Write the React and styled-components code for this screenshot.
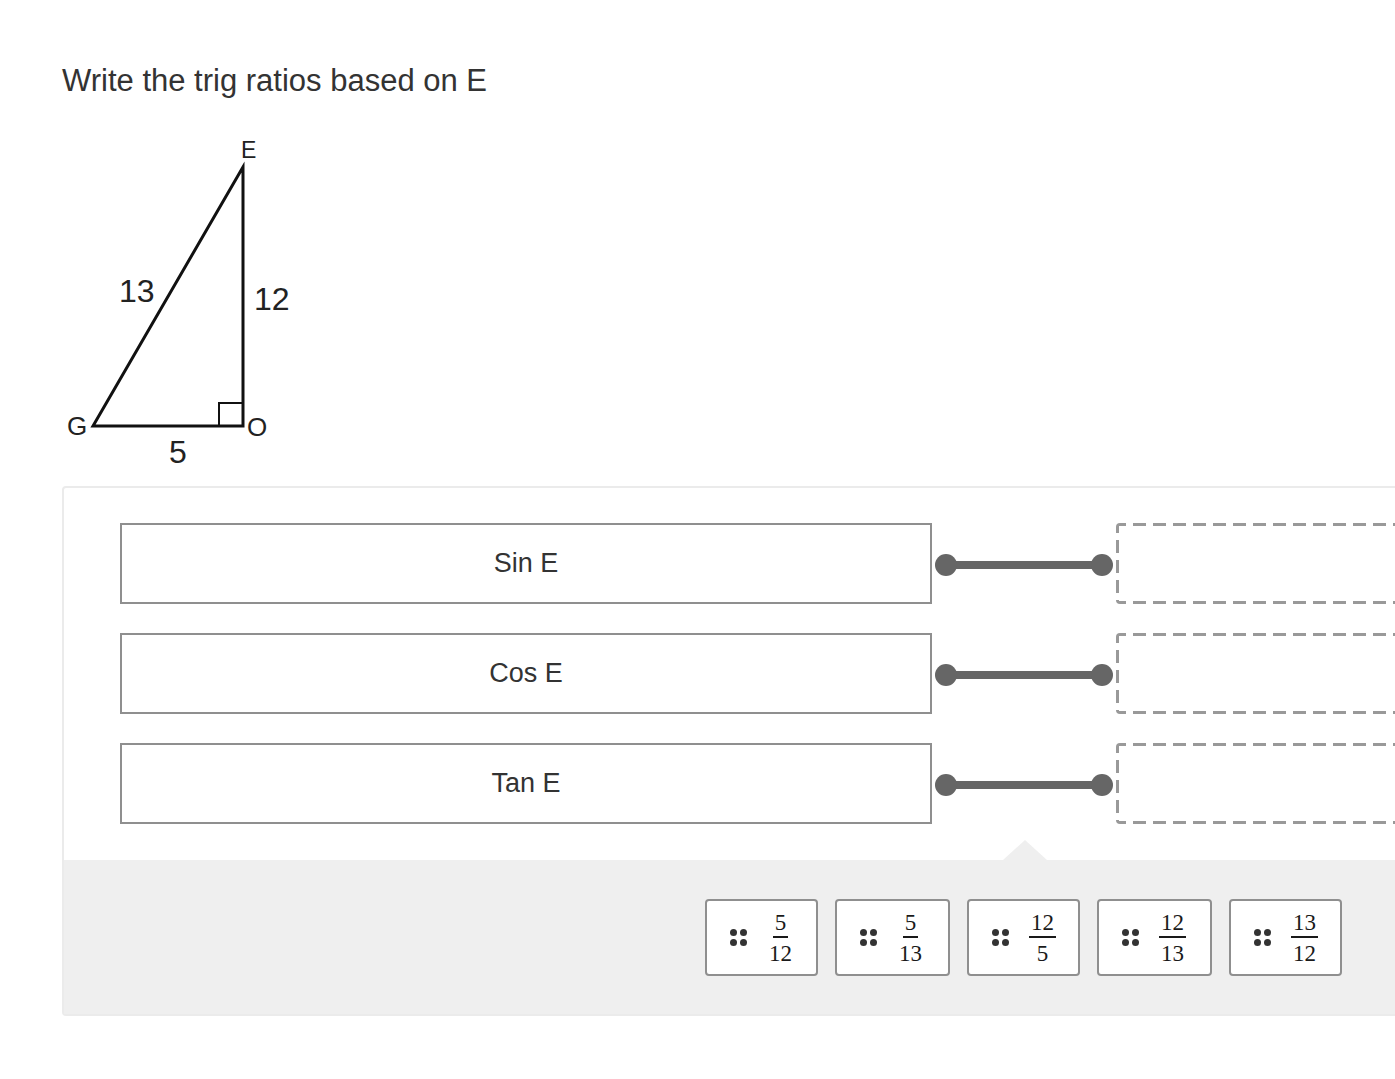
import React from "react";
import styled, { createGlobalStyle } from "styled-components";

const GlobalStyle = createGlobalStyle`
  html, body {
    margin: 0;
    padding: 0;
    background: #fff;
    overflow: hidden;
  }
  body {
    font-family: "Liberation Sans", Arial, sans-serif;
    color: #333;
  }
`;

const Page = styled.div`
  padding: 63px 0 0 62px;
  width: 1700px;
`;

const Title = styled.h1`
  margin: 0;
  font-size: 31px;
  font-weight: normal;
  line-height: 36px;
  color: #333;
`;

const Figure = styled.svg`
  display: block;
  margin-top: 31px;
`;

const Panel = styled.div`
  margin-top: 16px;
  width: 1600px;
  border: 2px solid #ebebeb;
  border-radius: 4px;
  background: #fff;
`;

const MatchArea = styled.div`
  display: flex;
  flex-direction: column;
  gap: 29px;
  padding: 35px 0 36px 56px;
`;

const Row = styled.div`
  display: flex;
  align-items: center;
`;

const Prompt = styled.div`
  box-sizing: border-box;
  width: 812px;
  height: 81px;
  border: 2px solid #8f8f8f;
  display: flex;
  align-items: center;
  justify-content: center;
  font-size: 27px;
  color: #333;
`;

const Connector = styled.svg`
  display: block;
  flex: none;
`;

// dashed outline drawn with gradients so the dash length matches (13px dash, 7px gap)
const DropZone = styled.div`
  box-sizing: border-box;
  width: 420px;
  height: 81px;
  border-radius: 4px;
  background:
    linear-gradient(90deg, #999 13px, transparent 13px) -3px 0 / 20px 3px repeat-x,
    linear-gradient(90deg, #999 13px, transparent 13px) -3px 100% / 20px 3px repeat-x,
    linear-gradient(180deg, #999 13px, transparent 13px) 0 -3px / 3px 20px repeat-y;
`;

const Tray = styled.div`
  position: relative;
  background: #efefef;
  padding: 39px 0 38px 641px;
  display: flex;
  gap: 17px;

  &::before {
    content: "";
    position: absolute;
    top: -20px;
    left: 939px;
    border-left: 22px solid transparent;
    border-right: 22px solid transparent;
    border-bottom: 20px solid #efefef;
  }
`;

const Chip = styled.div`
  box-sizing: border-box;
  width: ${(p) => p.width}px;
  height: 77px;
  border: 2px solid #8f8f8f;
  border-radius: 4px;
  background: #fff;
  display: flex;
  align-items: center;
  padding-left: 23px;
  gap: 20px;
`;

const Handle = styled.div`
  display: grid;
  grid-template-columns: 7px 7px;
  grid-template-rows: 7px 7px;
  gap: 3px;
`;

const Dot = styled.span`
  width: 7px;
  height: 7px;
  border-radius: 50%;
  background: #333;
`;

const Fraction = styled.div`
  display: inline-flex;
  flex-direction: column;
  align-items: center;
  font-family: "Liberation Serif", "Times New Roman", serif;
  font-size: 23px;
  color: #1a1a1a;
`;

const Numerator = styled.span`
  padding: 0 2px;
  border-bottom: 2px solid #1a1a1a;
  line-height: 27px;
`;

const Denominator = styled.span`
  padding: 2px 2px 0;
  line-height: 27px;
`;

const prompts = ["Sin E", "Cos E", "Tan E"];

const chips = [
  { num: "5", den: "12", width: 113 },
  { num: "5", den: "13", width: 115 },
  { num: "12", den: "5", width: 113 },
  { num: "12", den: "13", width: 115 },
  { num: "13", den: "12", width: 113 },
];

const Triangle = () => (
  <Figure width="240" height="340" viewBox="0 0 240 340">
    <g fill="none" stroke="#111" strokeWidth="3" strokeLinejoin="miter">
      <polygon points="181,37 31,296 181,296" />
      <polyline points="157,296 157,273 181,273" strokeWidth="2" />
    </g>
    <g fill="#222" fontFamily="Liberation Sans, Arial, sans-serif">
      <text x="179" y="28" fontSize="23">E</text>
      <text x="57" y="172" fontSize="32">13</text>
      <text x="192" y="180" fontSize="32">12</text>
      <text x="107" y="333" fontSize="32">5</text>
      <text x="5" y="305" fontSize="26">G</text>
      <text x="185" y="306" fontSize="26">O</text>
    </g>
  </Figure>
);

const Link = () => (
  <Connector width="184" height="30" viewBox="0 0 184 30">
    <line x1="14" y1="16" x2="170" y2="16" stroke="#666" strokeWidth="8" />
    <circle cx="14" cy="16" r="11" fill="#666" />
    <circle cx="170" cy="16" r="11" fill="#666" />
  </Connector>
);

export default function App() {
  return (
    <>
      <GlobalStyle />
      <Page>
        <Title>Write the trig ratios based on E</Title>
        <Triangle />
        <Panel>
          <MatchArea>
            {prompts.map((p) => (
              <Row key={p}>
                <Prompt>{p}</Prompt>
                <Link />
                <DropZone />
              </Row>
            ))}
          </MatchArea>
          <Tray>
            {chips.map((c) => (
              <Chip key={c.num + "/" + c.den} width={c.width}>
                <Handle>
                  <Dot />
                  <Dot />
                  <Dot />
                  <Dot />
                </Handle>
                <Fraction>
                  <Numerator>{c.num}</Numerator>
                  <Denominator>{c.den}</Denominator>
                </Fraction>
              </Chip>
            ))}
          </Tray>
        </Panel>
      </Page>
    </>
  );
}
